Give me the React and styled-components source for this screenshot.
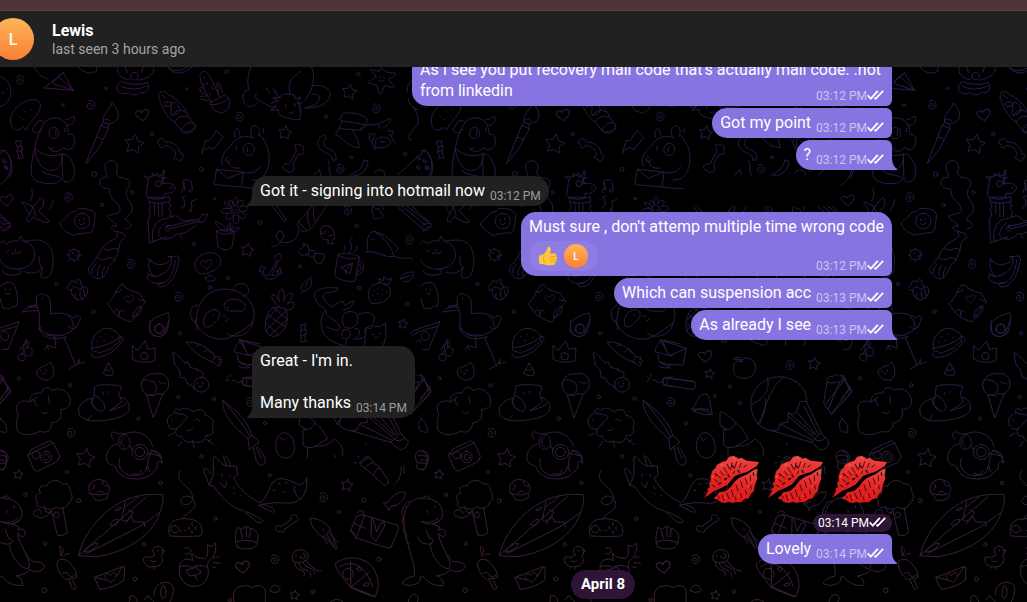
import React from 'react'
import styled, { createGlobalStyle, css } from 'styled-components'

const GlobalStyle = createGlobalStyle`
  * {
    box-sizing: border-box;
  }

  body {
    margin: 0;
    background: #000;
    color: #fff;
    font-family: Roboto, 'Liberation Sans', sans-serif;
    font-size: 16px;
    line-height: 21px;
  }
`

const Page = styled.div`
  display: flex;
  flex-direction: column;
  height: 100vh;
  overflow: hidden;
`

const TitleBar = styled.div`
  flex: none;
  height: 11px;
  background: #4f3439;
  border-bottom: 1px solid #594548;
`

const Header = styled.header`
  display: flex;
  flex: none;
  align-items: center;
  gap: 18px;
  height: 56px;
  background: #212121;
`

const Avatar = styled.span`
  display: flex;
  flex: none;
  align-items: center;
  justify-content: center;
  width: ${({ $size }) => $size}px;
  height: ${({ $size }) => $size}px;
  border-radius: 50%;
  background: linear-gradient(#ffb657, #f87e35);
  font-size: ${({ $size }) => ($size > 30 ? 16 : 10)}px;
  font-weight: 500;

  ${Header} & {
    margin-left: -8px;
  }
`

const Name = styled.h1`
  margin: 0;
  font-size: 16px;
  font-weight: 700;
  line-height: 20px;
`

const Status = styled.p`
  margin: 0;
  color: #a4a4a4;
  font-size: 14px;
  line-height: 17px;
`

const Chat = styled.main`
  position: relative;
  flex: 1;
  min-height: 0;
  overflow: hidden;
`

const Wallpaper = styled.svg`
  position: absolute;
  inset: 0;
  width: 100%;
  height: 100%;
`

const History = styled.div`
  position: relative;
  display: flex;
  flex-direction: column;
  justify-content: flex-end;
  gap: 6px;
  height: 100%;
  padding: 0 73px 3px 252px;
`

const Group = styled.section`
  display: flex;
  flex: none;
  flex-direction: column;
  align-items: ${({ $own }) => ($own ? 'flex-end' : 'flex-start')};
  gap: 2px;
  padding-right: 62px;
`

const Bubble = styled.div`
  position: relative;
  max-width: 480px;
  padding: 4px 8px;
  white-space: pre-line;
  background: ${({ $own }) => ($own ? '#8774e1' : '#212121')};
  border-radius: 15px;

  ${({ $own, $first, $last }) => $own && css`
    border-top-right-radius: ${$first ? 15 : 6}px;
    border-bottom-right-radius: ${$last ? 0 : 6}px;
  `}

  ${({ $own }) => !$own && css`
    border-bottom-left-radius: 0;
  `}
`

const Tail = styled.svg`
  position: absolute;
  bottom: 0;
  width: 6px;
  height: 14px;
  fill: ${({ $own }) => ($own ? '#8774e1' : '#212121')};
  ${({ $own }) => ($own ? 'left: 100%;' : 'right: 100%; transform: scaleX(-1);')}
`

const Meta = styled.span`
  display: flex;
  float: right;
  align-items: center;
  height: 12px;
  margin: 10px 0 0 5px;
  color: ${({ $own }) => ($own ? '#cbc3f3' : '#9c9c9c')};
  font-size: 12px;
  line-height: 12px;
  white-space: nowrap;
`

const Ticks = styled.svg`
  width: 17px;
  height: 12px;
  fill: none;
  stroke: #fff;
  stroke-width: 1.8;
`

const Footer = styled.div`
  display: flex;
  align-items: flex-end;
  justify-content: space-between;
  height: 31px;
  margin-top: 4px;
`

const Reaction = styled.button`
  display: flex;
  align-items: center;
  align-self: flex-start;
  gap: 6px;
  height: 30px;
  padding: 0 10px 0 9px;
  border: 0;
  border-radius: 15px;
  background: #8f7de3;
  color: #fff;
  font-family: inherit;
`

const BigEmoji = styled.div`
  display: flex;
  gap: 8px;
  padding: 31px 4px 7px 0;
`

const Pill = styled.div`
  display: flex;
  align-items: center;
  height: 18px;
  padding: 0 6px 0 5px;
  border-radius: 9px;
  background: #2e1437;
  font-size: 12px;
`

const DateLabel = styled.time`
  flex: none;
  align-self: center;
  height: 29px;
  padding: 0 10px;
  border-radius: 15px;
  background: #2e1437;
  font-size: 15px;
  font-weight: 700;
  line-height: 29px;
`

// small doodles that repeat all over the wallpaper
const swirls = [
  [60, 60], [272, 135], [205, 412], [392, 612], [535, 710], [718, 170], [1128, 145], [1042, 452], [1020, 327],
  [1228, 540], [212, 1119], [970, 1312], [824, 1498], [1107, 916], [750, 1026]
]
const stars = [
  [402, 253, 30], [855, 219, 21], [742, 571, 21], [1048, 96, 23], [1209, 792, 15], [256, 1195, 29],
  [55, 1244, 15], [867, 942, 15], [1180, 912, 19], [1041, 1276, 19], [884, 1606, 15]
]
const hearts = [
  [427, 164, 20], [20, 420, 19], [619, 612, 17], [388, 716, 14], [728, 1520, 21], [854, 888, 20], [332, 1552, 17]
]
const dots = [
  [318, 85, 4], [188, 135, 4], [560, 87, 4], [679, 35, 5], [456, 222, 5], [283, 342, 7], [604, 328, 6],
  [396, 397, 5], [306, 435, 5], [643, 416, 4], [582, 553, 5], [780, 487, 6], [170, 672, 5], [280, 755, 5],
  [684, 654, 5], [630, 683, 5], [978, 170, 5], [1075, 42, 5], [1054, 292, 4], [1069, 497, 5], [899, 619, 4],
  [1077, 684, 5], [1221, 732, 5], [1215, 282, 5], [539, 820, 5], [56, 955, 5], [210, 976, 5], [415, 1076, 5],
  [535, 1011, 5], [642, 1016, 5], [604, 1189, 5], [201, 1236, 5], [482, 1269, 5], [76, 1304, 5], [236, 1322, 6],
  [647, 1376, 5], [135, 1451, 5], [432, 1453, 5], [405, 1557, 6], [133, 1591, 7], [795, 1090, 5], [809, 1246, 5],
  [957, 1029, 5], [927, 980, 5], [1091, 1321, 6], [1017, 1356, 5], [1137, 1498, 6], [939, 1595, 5], [690, 1620, 5]
]

const starPath = r =>
  Array.from({ length: 10 }, (_, i) => {
    const a = (i * Math.PI) / 5 - 1.4
    const d = i % 2 ? r * 0.52 : r
    return `${i ? 'L' : 'M'}${(d * Math.cos(a)).toFixed(1)} ${(d * Math.sin(a)).toFixed(1)}`
  }).join('') + 'Z'

const upperLeft = [
  // paper plane, shell, potato
  'M132 84L190 38L220 91L132 84M190 38L158 66L162 72L220 91L176 50M102 20Q112 45 142 57',
  'M354 20C345 44 372 60 388 58M460 20C470 40 436 58 416 60M392 47A11 11 0 1 0 414 50A11 11 0 1 0 392 47M352 78C343 98 375 108 386 97C395 108 415 106 420 97C440 104 452 86 442 67C418 78 382 72 362 64C352 68 362 74 352 78M375 20L382 38M430 20L424 38M365 80Q402 96 440 78',
  'M32 185C28 145 85 108 115 122C138 150 88 182 78 210L70 202C45 220 32 205 32 185M58 170h2M75 155h2M92 148h2M70 178h2M90 168h2M0 50C45 60 42 130 0 140M6 98q4 6 8-2M22 85v2M234 20Q260 50 290 34L290 20M500 20Q535 60 578 20M505 24Q535 42 565 20',
  // candy and puppy
  'M48 244L64 242L62 254L68 262L64 276L70 293L54 296L56 284L50 276L54 264L49 254ZM52 262L66 258M52 276L66 270M0 272L14 272C40 290 42 350 0 374M8 300q12-2 10 8q-12 2-10-8M14 322q12-4 10 6q-12 2-10-6',
  'M104 266C110 232 122 205 130 192C145 168 180 168 195 188C205 200 204 215 206 224C220 218 228 238 222 255C215 272 195 272 190 262C178 280 150 276 145 262M132 186C118 172 108 188 97 210C100 220 118 222 126 208M196 178C208 182 210 168 222 170C228 188 214 196 200 196M162 202C142 202 142 236 162 236C182 236 182 202 162 202M168 208v18M195 205v10M152 268q4-8 10-4M104 266C95 295 90 340 98 352C108 374 175 378 185 358C178 342 130 348 124 330M104 266C112 350 190 350 187 284M104 266Q140 298 187 282M187 282C205 276 230 320 222 345C216 372 190 370 188 356Z',
  // paint brush, croissant, bone
  'M258 310L303 196L326 206L296 264ZM303 196L310 188L325 192L326 206M288 232Q300 230 308 240M310 188C304 160 332 150 336 128C364 160 362 186 325 192M310 182Q325 170 330 184',
  'M476 110C474 90 495 90 504 104C530 112 560 150 566 170L585 196C590 214 560 228 546 214L524 186C500 175 480 130 476 110M502 126a7 7 0 1 0 1 12a7 7 0 1 0-1-12M514 130C530 118 545 150 536 156C525 170 502 168 514 150ZM524 186Q540 160 566 172M546 214C538 204 570 176 585 194C590 206 560 222 546 214M514 168Q535 140 556 156M484 104l14 10',
  'M478 240C468 240 472 252 480 254C476 266 492 266 494 256C515 258 526 272 528 284C516 290 522 300 530 296C534 308 546 304 544 296C556 290 550 280 542 282C536 254 518 246 496 246C494 236 482 232 478 240',
  // cactus, crystal, bear with letter
  'M634 126C612 90 594 55 602 40C612 28 624 36 630 50L660 112M622 110L602 94C596 84 602 78 610 86M626 122L604 118C596 112 604 104 612 110M655 100L652 78C645 68 656 62 660 76L668 98M610 50l4 6M618 66l6 8M634 80l6 10M628 98l4 6M612 72l4 6M630 128L676 104L690 122L684 148L666 160L644 152ZM632 134Q660 136 686 116',
  'M605 280L616 242L628 242L650 212L670 232L640 268L626 262L608 272L606 280',
  'M650 328C644 360 642 372 644 374L724 381L730 336L650 328L684 355L730 336M668 318C660 300 670 275 690 260C705 232 735 222 760 234M684 292q-14 4-6 12q14 2 14-6M704 232C700 215 705 208 712 206C722 215 716 226 722 230M756 234C745 205 760 190 772 200C784 210 776 222 776 228M776 222C806 248 814 290 804 322C795 350 780 362 758 360M746 250C724 250 724 286 746 286C768 286 768 250 746 250M742 262v14M709 258v12M780 320Q765 345 732 338M724 381Q760 386 788 386M684 304Q690 330 718 324M790 206v12',
  // steam and bottle
  'M350 516C330 510 330 492 350 500C345 480 320 480 322 468C345 458 375 465 352 430C310 400 345 385 318 386C290 380 295 350 318 352C330 350 310 330 316 312C325 295 355 300 352 326C342 345 355 352 372 354C395 360 392 375 380 388C372 420 400 425 396 445C400 462 375 470 376 480C400 490 400 505 376 506',
  'M350 514L370 520L376 530L360 548C355 580 345 605 326 620C318 650 300 664 282 652C268 640 262 632 268 620C290 600 292 585 306 565C325 540 340 545 352 528ZM308 562Q320 576 334 568T358 572M292 592Q305 605 320 596T346 602M288 612Q275 620 276 640M300 616Q290 630 292 648M314 620Q304 634 306 650',
  // llama with guitar, notes
  'M438 402C445 370 440 350 460 348C472 342 470 352 488 352L486 372C505 366 522 372 526 382C522 400 505 402 494 400L492 412L446 412ZM456 348L458 340L466 346L472 338L476 348L486 346L490 330L494 332L490 356L500 352M444 360C428 346 432 346 440 350L450 352M474 362a9 9 0 1 0 1 18a9 9 0 1 0-1-18M492 356a6 6 0 1 0 1 12M514 380v6M446 412Q470 425 508 410L510 425Q480 434 448 426ZM463 430L464 462M475 430L476 470M487 430L486 470M448 428L452 440L446 452L452 462L444 480L448 550M506 428L512 438L506 446L514 456L510 468L518 472M460 545C452 520 462 495 475 484C490 472 495 480 512 470C535 462 535 475 548 482C560 484 570 478 582 480M495 490C480 500 470 520 478 530C490 545 520 535 528 522C550 525 570 510 588 496M500 500L596 478L600 484L510 506ZM508 496a9 9 0 1 0 1 16M596 478L606 464L625 463L612 484L600 488M540 526L545 535M448 550Q452 544 460 545M460 545L500 530',
  'M546 398C542 386 552 384 554 390L548 365Q560 354 574 364L578 392C568 402 560 390 574 388M554 390L552 368M546 446q0-10 8-8L552 418L546 412L556 408M570 452q0-10 6-8L574 424L588 418M568 456q6 2 8-6',
  // daisy in a pot
  'M704 434C690 434 688 466 704 466C722 466 722 434 704 434M692 440C678 420 694 412 700 432C696 400 720 408 710 432C726 410 740 424 722 440C750 432 754 456 722 454C750 470 730 486 716 466C722 496 696 500 700 468C680 490 668 474 688 458C654 468 656 440 690 446C660 430 672 414 692 440M698 448v3M710 448v3M698 456q6 5 12 0M700 496Q694 505 688 512M678 516C660 510 640 485 646 485C660 488 678 500 682 514C680 495 690 484 692 490L688 512C700 504 715 500 718 505C710 514 698 516 690 516M650 514L654 560Q675 578 696 562L704 514Q675 504 650 514Q675 532 704 514',
  // toy plane, fried egg, virus
  'M80 450C75 430 60 430 70 426L100 440L122 414C130 410 132 420 130 436C128 444 118 446 115 452L148 484C140 492 125 485 100 470C95 478 88 488 84 486C76 480 82 470 88 462ZM100 440L88 462M96 440Q106 450 106 466M95 386Q102 410 90 424M160 418Q158 440 146 450',
  'M180 492C180 480 196 482 204 464C215 450 225 462 235 445C260 445 285 450 286 466C282 485 284 510 272 518C245 520 240 520 220 526C200 520 180 500 180 492M246 460C216 460 216 506 246 506C276 506 276 460 246 460M238 478v4M252 476v4M238 490q8 10 16-2',
  'M222 568a16 16 0 1 0 1 32a16 16 0 1 0-1-32M222 568v-5M236 574l4-4M240 585h4M234 597l4 4M222 600v4M210 597l-4 4M205 585h-4M210 572l-4-4M216 580h4M228 588a4 4 0 1 0 5-4',
  // sleeping cat
  'M0 550L8 542L20 552C30 542 45 542 55 542L62 528L70 544C95 548 106 570 104 590C96 640 10 636 0 600M46 568v6M34 578q6 8 12 0q8 6 18-4M18 576l10-6M70 544Q110 536 130 544C165 560 164 610 152 644C140 656 122 658 122 644L128 620C122 635 100 645 76 636M8 630C4 642 30 650 60 642C66 632 60 626 52 628M118 590Q115 605 122 620',
  // bananas, thought bubble, pillow
  'M505 590L534 588L538 600C530 625 530 650 500 676C480 684 470 680 474 672L490 668C460 674 450 665 442 655L444 642L462 650C440 625 445 610 450 598C460 612 480 622 506 605L516 594L505 590M516 600C512 630 492 645 462 650M526 600C522 640 508 662 490 668M444 596L454 606M444 642Q452 650 460 648',
  'M585 620C580 590 620 572 645 580C672 590 666 625 636 634C605 650 590 640 585 620M616 654C622 642 644 646 645 656C640 668 620 666 616 654',
  'M324 730C340 715 345 700 352 688L360 675L372 675L378 684Q395 695 420 700L426 712L436 726L428 734C415 745 410 770 392 786C370 780 345 765 340 756ZM345 696Q362 700 364 688M398 770C398 755 415 735 424 740C428 755 410 775 398 770M416 718Q424 725 434 722M344 756C350 740 360 752 358 762M372 756C365 745 355 750 358 768',
  // cupcake, ghost, goose
  'M214 690C198 694 198 678 210 674C210 660 220 660 228 668C232 650 246 660 240 674C255 672 244 684 240 690C225 675 218 680 214 690C214 705 222 718 238 720C262 715 266 690 260 682Q250 676 240 690M226 700Q220 708 230 718M240 696Q236 708 246 716M250 688Q254 700 254 708',
  'M0 680C10 665 30 664 40 672C52 690 56 720 50 738C46 745 40 735 34 742C26 752 18 742 10 745C6 735 2 725 0 715M16 686v4M30 686v4M18 700q6 6 12 0',
  'M66 756C80 740 95 740 112 742L112 736L84 738Q95 738 110 734C105 700 120 698 134 704C158 712 150 740 152 762C175 756 205 760 222 775C226 765 236 766 242 774L230 802Q215 810 205 800M112 742C125 770 115 790 118 810M66 756Q95 750 116 752M205 770Q222 780 220 800M126 714v3M118 805C125 830 150 845 200 830M140 825Q190 840 230 800',
  // panda
  'M592 810C580 760 600 705 650 690C720 675 775 730 760 778C755 830 700 838 680 820M592 735C565 738 565 778 588 790M700 688C700 670 740 660 746 690C746 705 735 708 728 708M672 738C672 720 690 716 708 718C740 724 740 745 728 754C706 752 690 756 680 750ZM612 795C605 770 625 750 645 748C664 752 662 775 645 785C632 804 615 805 612 795M684 740v4M640 764v4M668 768h8M676 784q8-2 10-8',
  // avocado
  'M450 790C460 770 485 766 505 758C512 770 505 800 500 815C490 835 450 835 448 810ZM478 792C462 792 462 820 478 820C494 820 494 792 478 792'
]

const upperRight = [
  // whale and axolotl
  'M32 22C20 60 22 76 28 90C5 85 2 130 22 138C40 142 52 134 52 126M50 98Q42 108 52 118L94 142M150 100C142 70 155 50 172 42L182 34M215 22C228 50 220 90 194 122M220 78C250 70 275 88 270 108C262 138 220 146 194 144Q230 138 238 120C240 108 232 98 216 104',
  'M94 142L110 138L92 152L116 148L114 160C135 175 160 180 180 178C184 150 178 130 172 124L182 112L166 116L164 106C140 98 125 102 120 112L102 96M120 112L98 114L116 122L94 130M172 130L184 128L176 140L184 148M78 82L90 100M100 85L110 98M138 134v10M164 130v10M148 158q8 6 14-2',
  // starfish
  'M400 38C388 30 388 22 400 30L418 34L424 22L438 36L466 40C470 46 455 54 444 58L464 78C464 88 440 78 434 76L424 100C416 106 414 90 412 76L386 70C384 62 400 58 408 52ZM420 50v3M432 52v3M418 62q8 6 14 0',
  // bones and streamers
  'M166 260C160 252 172 250 176 256C188 252 194 260 188 270C196 276 190 286 176 282L158 314C168 324 160 338 150 336C146 340 138 336 140 330C126 330 124 318 134 314C140 310 146 312 148 312L168 276Z',
  'M250 224C230 235 226 262 250 274C268 285 278 286 276 300L288 300C290 280 280 272 264 266C248 258 248 246 258 236ZM372 300L384 303C386 325 365 350 340 346M372 300C370 325 350 334 330 346M264 302C275 320 260 320 272 346M222 345L238 328L242 345M402 340Q415 322 432 335L434 345',
  // jar of flowers
  'M306 165C315 152 350 158 378 172C385 185 378 195 370 194C345 185 315 188 300 180ZM306 186L298 204C320 210 345 210 360 210L372 196L414 192L420 206M298 204L286 222C300 230 315 245 330 256C340 260 350 264 358 262L354 240L334 206M380 196L360 214M414 192L450 176C455 184 440 196 430 204M388 225C388 215 396 220 396 226C402 216 408 224 404 232L396 246L388 238ZM396 246L404 270L410 262M408 240C420 225 448 230 452 248C445 262 420 268 408 262ZM445 215C440 205 452 208 452 216C460 208 462 220 454 226L446 222M452 226L465 250M420 244q8 6 14 0',
  // balloon, melon, pencil
  'M502 95C500 75 508 65 515 64M504 115C505 130 515 140 525 142L522 148L532 148M526 148C530 165 540 175 532 195C515 215 500 228 510 242L516 236M472 345L556 270C580 295 585 330 570 352M532 292q10-4 10 6q-10 4-10-6M530 320q10-4 10 6q-10 4-10-6M556 318q10-4 10 6q-10 4-10-6M472 440L545 505C555 520 575 505 572 490L515 438M486 438L556 495M500 438L562 485M545 505Q548 488 572 490M550 514Q555 500 574 500',
  // firework, lighter stick
  'M98 440L134 486L140 480L110 438M218 438L176 484C168 495 178 510 188 514C205 516 215 505 222 495L258 440M205 450Q198 475 210 500M222 440Q215 465 225 485M176 484Q190 505 200 510M176 510C175 535 160 546 138 548C108 550 100 520 120 514C138 515 132 535 122 545C115 556 100 562 94 558M398 440Q392 455 400 465C394 480 410 476 414 474C432 478 434 462 424 460Q418 442 408 446ZM428 440L430 450',
  // chick, bow tie
  'M264 540C242 545 236 510 246 500C265 490 285 505 284 530C282 540 276 540 274 544L282 552L264 550ZM256 512v4M242 520h12M266 528L278 524',
  'M174 574L194 556L188 550L204 556L208 572C220 568 226 576 224 580L254 582C250 595 255 600 246 604L242 612L226 606L222 592C210 592 206 588 204 584L186 586ZM208 572L204 584M224 580L222 592',
  // anchor, mug
  'M118 582C105 580 100 595 110 600L88 644M118 582C128 586 125 600 115 602L96 646M112 590h2M58 634L62 618L76 624L70 632C70 645 76 650 88 644M96 646C108 650 115 645 116 634L108 636L120 624L124 642L118 640C110 662 70 668 62 630',
  'M294 584C305 574 345 582 358 590C350 602 305 596 294 584L284 646C298 662 330 668 346 662L358 590M358 604C378 605 376 640 350 646M358 614C366 616 365 630 354 636M302 622L338 610L330 642L316 632L302 622M338 610L316 632L318 642M312 572Q320 565 314 556M328 578Q340 562 332 548Q326 540 338 530M342 578Q352 570 350 558',
  // shark fin, leaf, strawberry
  'M376 576Q400 572 420 582T466 590Q485 598 500 594T518 600M384 572C378 545 382 520 402 514C430 520 460 545 476 566L466 574M402 514C430 530 455 560 462 588M392 538q6 6 12 0M184 690C180 675 195 665 210 655C220 665 214 690 188 694L184 700M202 668L196 680M210 655L214 650M482 656C485 640 505 635 520 636C520 660 505 668 490 664M480 658L510 646',
  'M386 700C384 680 400 672 420 668C445 670 455 685 450 706C440 724 420 732 396 730C386 722 386 710 386 700M420 668L416 656L430 662L432 650L440 658L456 656L446 672L432 676M400 690h2M414 684h2M428 688h2M398 706h2M412 702h2M426 704h2M438 698h2M404 720h2M420 718h2',
  // pineapple and candy
  'M118 742C85 735 70 780 78 810C85 835 110 832 122 820C145 800 145 765 138 748ZM118 740C100 725 92 710 96 704C108 705 116 715 118 724C110 700 120 690 126 686C136 700 134 715 130 722C140 700 152 698 158 700C160 712 148 724 142 730C158 724 165 730 162 736C156 750 145 752 138 750M84 764Q115 790 138 800M80 790L112 822M100 742L144 780M78 812L138 752M90 826L145 775M80 780L112 744M182 795L198 792L194 804L200 815L194 828L198 845L182 846L184 832L180 820L184 808ZM182 812L198 808M182 828L198 822',
  // monkey with kitten
  'M292 684C260 680 220 685 224 710C228 735 250 740 258 750C238 770 240 800 252 820C262 840 285 850 310 856M292 684C296 700 275 692 255 700C240 712 260 728 276 742C290 730 305 720 312 726C310 745 325 728 340 722C345 738 325 748 308 750M308 790C300 760 325 748 345 758C360 775 355 795 335 804C318 806 310 800 308 790M258 755C265 780 285 775 300 800C302 820 270 805 258 800M310 810C330 800 340 830 320 836C305 840 300 825 310 810M344 806C360 800 365 825 350 832M355 765C380 750 412 760 402 785C398 800 370 800 374 818M374 856L378 802L390 806L400 798L418 800L436 790L438 830L430 856M398 820v4M420 818v4M404 832q6 4 10 0M320 840L316 856M340 836Q360 842 372 830',
  // pizza slice
  'M510 822C530 800 570 800 600 784L566 868L548 868M516 828C535 812 560 808 590 800M556 815C540 815 540 842 556 842C572 842 572 815 556 815M530 845q8-12 14 2'
]

const lowerLeft = [
  // goose legs, burger, cherries, crown
  'M164 52L168 84L140 76M134 90L140 78L148 90M192 52L228 138M206 148L232 132L238 118L236 132L254 126M120 20C125 40 150 48 172 44',
  'M276 84C270 50 300 20 330 26C355 36 358 44 360 50C345 66 310 80 276 84M276 84C270 96 285 92 292 96C300 104 305 94 315 94C325 85 340 88 345 74C355 70 362 65 360 50C372 48 374 56 364 66C350 90 330 100 310 108C290 115 272 115 274 100M300 50h2M318 42h2M336 52h2M312 62h2M292 66h2',
  'M66 102C50 100 50 122 66 122C80 122 80 102 66 102M82 82C102 78 102 112 82 108C72 104 70 88 82 82M66 102C72 90 70 80 78 60M82 82L78 60C84 60 90 64 86 76M60 90L72 72M398 76L412 92L436 62L444 88L466 84L464 122Q430 134 398 118ZM432 98a11 11 0 1 0 1 22a11 11 0 1 0-1-22',
  // avocado, panda chin, carrot
  'M450 0C445 30 455 48 475 50C500 48 495 20 508 0M478 12C458 12 458 40 478 40C498 40 498 12 478 12M584 0C600 45 640 62 680 56C710 45 735 25 758 8M560 66C590 62 640 90 645 112L636 126C610 115 575 95 560 66M590 78l8-4M612 96l10-8M626 90l8 10M645 112C665 105 665 118 655 118C675 120 665 130 655 126C668 138 655 142 646 130L636 126',
  // comet, strawberry, acorn, ice cream
  'M524 134L518 98C535 100 545 125 556 130L562 124L570 142L594 148L590 152C615 150 612 168 606 172M604 172C575 172 575 216 604 216C634 216 634 172 604 172M524 134L538 150L542 172L556 175L560 188L576 198L582 206M592 188v4M608 188v4M596 200q8 4 12-4',
  'M110 158C108 145 130 140 142 134L150 126L154 132C165 145 162 175 145 180C125 182 112 172 110 158M122 152v3M138 150v3M128 160q5 4 8 0M310 160C315 145 322 140 324 130C330 140 342 150 340 164Q325 172 310 160M314 148Q328 158 336 144M324 130L330 132',
  'M426 204C415 180 438 175 448 182C470 185 475 205 462 220C450 232 430 225 426 204M424 195C425 170 450 158 466 162C478 155 505 165 505 185C508 205 500 215 492 216C500 225 475 222 470 220L462 228L445 224M440 226L460 294L488 222M478 184C480 196 492 182 498 192',
  // chef hat cloud, hot tub bear, cream
  'M50 270C45 245 70 238 90 246C85 225 110 215 124 220C128 198 150 198 156 212C170 202 205 205 210 240C215 260 195 270 182 268C190 300 165 310 156 308C155 335 135 340 120 334C90 350 60 345 52 330C42 300 62 290 50 270M90 246Q95 235 105 240M110 232C95 230 105 250 112 258M145 230L148 250M124 276Q135 286 144 276M0 165L32 212L0 250M0 175L12 180L24 210L0 235',
  'M236 276C230 250 265 235 280 234C285 215 282 205 286 198C300 192 350 194 362 198C368 215 350 215 360 232C385 235 392 258 386 272C375 295 310 305 270 302C245 295 236 290 236 276M280 234C265 245 280 262 300 274C325 274 315 240 285 226M280 234C270 240 278 260 290 270M360 232L366 245Q350 260 328 272Q370 262 378 250M262 302L275 285M310 218v4M326 214v4',
  // sheep, umbrella
  'M502 300C505 285 515 285 524 278C520 265 530 264 540 270C555 258 570 268 580 276C600 262 618 272 614 285C640 290 645 310 636 320C648 345 625 350 618 345C615 372 585 370 578 362C560 375 545 355 545 348C525 352 525 335 530 326C515 330 502 325 502 300M524 278C535 285 560 280 562 292C555 298 555 305 548 306C540 322 530 326 530 326M516 300v3M504 348L520 340M546 364L536 380M578 364L582 382M620 358L642 374M625 366L634 358M585 300q10-8 14 4M560 330q12 6 18-6',
  'M668 240C690 260 740 290 756 346L744 356C715 330 665 290 668 240M672 244C700 280 730 310 750 350M744 356L748 390L760 380L778 366L756 346M760 382L768 420C774 442 800 440 796 418L782 390L772 380M770 384L784 415',
  // egg, firecracker
  'M852 338C830 340 820 375 832 398C845 420 875 420 882 395C888 370 875 338 852 338M840 352l8 10l8-8M730 174L756 170M730 196L756 200M730 174C724 180 726 192 730 196M726 184L712 188Q705 178 698 180M690 162L692 170M680 170l6 6M678 182l8-2M704 96C700 80 720 65 724 60L780 72M704 96L756 108M724 60L738 92M712 104L715 125L750 145',
  // camera, pilot
  'M84 405L95 388L150 362L160 368L180 410L170 426L112 454L102 448ZM84 405L160 368M108 394C92 394 92 416 108 416C124 416 124 394 108 394M138 394C116 394 116 428 138 428C160 428 160 394 138 394M138 402C128 402 128 420 138 420C150 420 150 402 138 402M0 392C20 390 28 430 10 450L0 448M0 420L18 420',
  'M352 372C325 375 310 410 325 430C340 440 345 432 350 450C370 485 440 485 460 455C480 445 465 430 475 425L486 425C480 395 460 400 455 390C480 395 485 405 486 430M340 358C330 345 332 335 345 336C355 345 370 340 380 340C415 328 450 345 458 380M372 344C350 344 350 388 372 388C396 388 396 344 372 344M420 374C386 374 390 418 420 418C454 418 450 374 420 374M390 376L396 388M372 352C360 352 360 380 372 380M418 382C400 384 400 408 418 410C440 408 440 384 418 382M446 400L480 408M360 415C350 440 365 455 385 465C410 470 440 465 440 440M396 460L416 464L424 450M455 390C440 420 440 450 450 456',
  // tree, mushroom
  'M112 546C100 525 115 520 122 520C112 505 120 495 140 498C145 480 175 475 186 492C205 488 212 505 210 512C222 530 215 545 206 548C200 570 175 568 168 560C160 572 135 568 132 560C120 570 105 558 112 546M132 560L138 575L152 580M152 574C145 595 110 598 112 588C98 592 96 575 108 570C120 566 128 575 124 582M154 570L172 646Q190 650 202 638L188 562M168 576C158 578 160 592 170 592C182 592 180 576 168 576',
  'M270 520C262 505 265 482 295 478C320 480 330 495 328 512C322 530 285 525 270 520M270 520C275 528 285 532 284 540Q302 546 322 534L324 524M276 490Q292 500 275 510M308 484Q306 500 324 498M292 520Q300 505 312 520',
  // surfboard
  'M236 706C245 665 270 620 320 575C370 535 420 518 488 524C492 540 485 575 465 610C430 665 360 700 290 710ZM236 706L440 530M260 700L415 622Q450 600 478 578M376 545L365 600Q375 610 395 590L402 606L432 606L434 620M376 612L400 576L385 570M415 530L376 560M254 696C262 680 282 668 294 670C288 685 268 696 254 696M330 614C332 602 350 595 356 600C352 615 338 620 330 614M346 570q10-12 18-6q-6 10-18 6',
  // gamepad
  'M510 648C500 630 508 600 535 598Q560 592 580 600C605 605 612 635 602 648Q555 652 510 648M524 616C508 616 508 638 524 638C540 638 540 616 524 616M578 608a4 4 0 1 0 1 8M578 632a4 4 0 1 0 1 8M568 620a4 4 0 1 0 1 8M588 620a4 4 0 1 0 1 8M540 632h3M555 632h3M550 596C550 580 580 578 586 555C582 530 560 520 545 535C535 550 555 560 570 550C585 535 578 520 560 500C535 480 530 470 542 450',
  // fox
  'M640 412L640 465L628 496M640 412C648 402 655 425 665 430L678 438L710 438L712 466L700 474C720 510 750 535 780 548M628 496L642 500C670 540 700 565 730 572L770 606C785 612 795 605 780 595L740 575M628 496L612 455C610 440 618 440 632 462M670 408L680 438M670 408C680 405 690 425 692 438M780 548C810 530 800 495 830 478C860 470 880 490 900 495C915 490 918 480 920 472C925 520 905 545 870 550C840 548 820 545 776 556L815 576C828 580 825 565 812 562L790 552M884 498Q878 520 900 538M660 488l14 16l6-18M665 462v6M690 465v5M700 500l4 6M720 525l4 4M700 520l3 4M820 510l6 2M835 490l6 2M856 488l5 2M850 516l6 2',
  // shell, bone, squid
  'M712 682C700 660 708 640 712 622L726 628C735 615 745 620 750 626C765 625 772 640 774 645C775 665 770 685 750 686Q730 690 712 682M722 632L728 655M738 622L740 650M752 626L748 652M710 665Q740 655 770 668M828 628C822 618 834 614 842 620L874 598C868 588 876 584 882 586C885 578 892 590 890 592C900 596 892 606 884 606L852 630C855 640 845 638 842 634C835 636 828 634 828 628',
  'M932 594C960 595 985 615 990 630L970 652C950 640 930 620 932 594M970 652L982 672M976 650L1000 680M982 645L1008 688M990 632L1012 686M990 640L1014 668M970 626v6',
  // duck, fish bowl, popsicle, letter
  'M464 704C450 690 465 675 478 680C495 685 490 700 484 712C495 720 482 740 465 740C440 745 425 725 432 712C440 710 445 712 450 712ZM484 690L494 692L486 700M450 742L446 746M464 740L462 748M474 690v3M450 720Q458 730 468 722',
  'M538 750C535 720 560 710 578 722L575 700L590 712L614 716C628 705 622 690 622 675L636 680L646 668C652 700 638 712 625 724L622 738C630 760 622 790 595 798C560 805 535 780 538 750M540 740Q560 732 575 742Q600 730 622 742M560 750L590 742C590 750 602 750 604 758L590 765L570 768ZM585 768L592 780M554 684Q575 680 572 695Q565 708 555 700M636 740L648 744M640 728L660 730M640 716Q650 705 656 712',
  'M172 740C165 720 185 712 202 722C222 740 230 755 230 772C215 780 205 772 200 780C185 770 175 755 172 740M188 760Q200 752 206 765T228 762M206 780L218 806C228 812 230 800 226 798L218 780M180 680C186 678 195 690 184 708ZM192 708Q196 698 208 702M284 772L368 740L374 742L372 780Q340 805 300 808ZM284 772L320 780M368 740L350 768',
  // jellyfish, cloud, leaf
  'M878 722C870 700 890 685 910 690C930 698 925 715 918 722Q895 735 878 722M888 706v4M900 708a8 8 0 1 0 8-8M884 728Q885 745 902 750T912 768M896 730Q900 745 918 750T932 770M908 728Q915 740 930 745T944 762M918 722Q930 740 945 748T964 752M702 846C696 820 705 798 730 798C745 792 755 805 758 802C780 790 802 800 796 828L796 846M810 812C812 800 820 795 828 796C842 800 842 812 836 815Q820 822 810 812M388 846L390 828Q405 820 412 846M434 840L444 826L462 846M462 825C460 800 480 785 500 787C525 790 525 815 510 846M490 796C480 800 480 830 488 836C500 835 500 800 490 796'
]

const lowerRight = [
  // peach, bell, paper roll
  'M222 90C225 75 240 78 248 80C245 70 225 75 222 72C235 62 250 70 250 76L258 66L262 70C285 70 290 90 286 110C275 132 250 134 235 126C222 118 218 105 222 90M16 128C8 130 8 148 16 150L100 164C108 160 110 145 104 140ZM16 128C26 130 26 148 18 150M26 130L104 140M0 80L22 88L70 90L80 40L0 14L30 62L80 40M0 95L22 100L32 90',
  'M96 222C110 210 115 185 125 180C138 170 150 185 150 195L158 238C140 242 110 235 96 222M96 222Q125 218 158 238M100 230Q120 215 150 225M162 180v6M168 178v10M140 176l4 4',
  // hot air balloon
  'M340 288C295 285 270 240 274 200C280 150 325 120 372 126C420 135 445 170 440 200M324 128C330 170 318 185 272 212M372 126C340 150 318 200 300 268M318 190Q322 240 292 268M340 288L355 284L362 265L384 262L386 232Q400 245 412 228L422 198L440 200M440 200L484 292M434 215L475 296M412 232L470 300M388 245L462 308M362 268L458 315M340 288L455 322M386 232L465 300M455 322L484 294L508 320Q505 342 482 345L455 322M464 312Q480 325 498 308',
  // cake slice
  'M492 205L502 140C500 128 512 120 518 126C525 115 535 118 540 124C550 115 558 128 556 135L576 172L516 238L492 205M502 142Q525 148 556 135M500 205L550 140M516 238L572 155M506 222L540 142M540 275C535 265 545 256 548 252C562 265 566 275 564 292C545 292 538 285 540 275M548 252L544 246',
  // tree and popsicle
  'M182 232C190 225 215 250 228 262C225 275 210 284 204 284L182 272ZM204 284L192 284L192 330C200 340 220 340 228 334L265 312C260 295 240 272 228 264M228 334C245 335 270 330 286 312C305 325 318 345 310 362M205 336L205 370M265 335h2M285 360L292 370'
]

const lowerMiddle = [
  // torch, flashlight beam, cupcake
  'M90 432C88 420 110 405 118 412L132 430L148 440L175 482C178 492 165 498 158 492L118 455L104 445ZM90 432Q100 420 118 412M104 445Q110 432 130 428M132 462Q136 446 150 444M108 370v4M82 408l6 4M80 428h-8M196 490Q215 475 214 440M222 440V460M262 425C252 415 254 395 270 392C290 390 300 405 295 425Q278 435 262 425M262 425L260 444Q275 455 288 440L290 425M262 408Q275 400 292 412',
  // fish, jar
  'M176 545C185 525 205 515 226 516C228 535 205 560 184 558L176 572L172 560L160 552ZM62 632L78 590Q90 582 104 586L204 616L205 630L182 684Q170 686 80 654ZM78 655L104 586M125 594L130 600L140 636L150 612L162 606L164 618L138 664L124 650ZM72 610L106 625M82 578q8-10 16-4q8 4-2 10M64 632L78 645',
  // dinosaur
  'M252 768C262 740 232 690 228 640C215 600 220 550 260 536C300 528 335 545 338 578C338 600 325 608 308 612L328 620L326 630C345 620 355 640 340 652L324 640C335 680 350 705 368 724C390 725 405 730 406 742C395 755 375 760 362 748C350 760 340 765 320 768C335 770 342 790 340 796C310 800 290 785 278 768L270 772C278 795 230 802 218 790C220 778 240 770 252 768M275 605Q305 612 324 596M275 605Q310 622 325 602M292 570v8M314 558v6M262 650Q270 672 290 672C312 675 315 655 298 655L288 628M302 668C295 690 325 745 356 746C365 735 360 720 348 705M222 560C212 575 216 590 222 590C212 605 218 618 224 618C218 630 222 642 228 645C225 655 232 670 238 670M240 545C232 540 226 550 224 560M278 534Q290 522 300 532',
  // pizza
  'M18 730C50 700 145 705 145 800L136 830C110 825 90 815 62 802C45 780 25 760 18 740ZM30 740C50 725 100 718 128 800M62 725L62 802L120 755M55 745C30 745 35 778 55 778C75 778 75 745 55 745M80 745Q95 738 94 750Q85 760 80 745M100 795Q105 785 118 790Q112 805 100 795M60 800L136 830M235 846Q240 820 258 824Q270 832 262 846M0 846Q20 830 40 846'
]

const Tile = () => (
  <g id='tile'>
    {upperLeft.map(d => <path key={d} d={d} />)}
    <g transform='translate(720 0)'>{upperRight.map(d => <path key={d} d={d} />)}</g>
    <g transform='translate(0 780)'>{lowerLeft.map(d => <path key={d} d={d} />)}</g>
    <g transform='translate(717 825)'>{lowerRight.map(d => <path key={d} d={d} />)}</g>
    <g transform='translate(990 780)'>{lowerMiddle.map(d => <path key={d} d={d} />)}</g>
    {dots.map(([x, y, r]) => <circle key={`${x}-${y}`} cx={x} cy={y} r={r} />)}
    {swirls.map(([x, y]) => (
      <path key={`${x}-${y}`} transform={`translate(${x} ${y})`} d='M-10-10C-2-18 14-12 12 2C10 16-10 16-10 3C-9-7 4-7 4 1C3 7-3 6-3 2' />
    ))}
    {stars.map(([x, y, r]) => <path key={`${x}-${y}`} transform={`translate(${x} ${y})`} d={starPath(r)} />)}
    {hearts.map(([x, y, r]) => (
      <path key={`${x}-${y}`} transform={`translate(${x} ${y}) scale(${r / 20}) rotate(-6)`} d='M0 18C-10 10-22 2-20-7C-17-16-5-14-1-6C4-18 20-18 20-5C19 5 8 12 0 18' />
    ))}
  </g>
)

const Doodles = () => (
  <Wallpaper aria-hidden='true'>
    <defs>
      <linearGradient id='across'>
        <stop offset='0' stopColor='#351343' />
        <stop offset='0.3' stopColor='#2e1742' />
        <stop offset='0.6' stopColor='#221d46' />
        <stop offset='1' stopColor='#20204f' />
      </linearGradient>
      <linearGradient id='down' x2='0' y2='1'>
        <stop offset='0.35' stopColor='#3a1c3c' stopOpacity='0' />
        <stop offset='1' stopColor='#3c2138' />
      </linearGradient>
      <mask id='lines' maskUnits='userSpaceOnUse' x='0' y='0' width='100%' height='100%'>
        <g transform='translate(0 -7) scale(0.33333)' fill='none' stroke='#fff' strokeWidth='3' strokeLinecap='round' strokeLinejoin='round'>
          <Tile />
          {[-1, 1, 2, 3, 4].map(n => <use key={n} href='#tile' x={n * 1262} />)}
        </g>
      </mask>
    </defs>
    <g mask='url(#lines)'>
      <rect width='100%' height='100%' fill='url(#across)' />
      <rect width='100%' height='100%' fill='url(#down)' />
    </g>
  </Wallpaper>
)

const Kiss = () => (
  <svg width='56' height='50' viewBox='0 0 168 150' role='img' aria-label='Kiss mark'>
    <defs>
      <linearGradient id='lip' x2='0' y2='1'>
        <stop offset='0' stopColor='#ee4a48' />
        <stop offset='0.5' stopColor='#e32424' />
        <stop offset='1' stopColor='#dc1919' />
      </linearGradient>
    </defs>
    <path fill='url(#lip)' d='M1 128L12 108L10 102L18 96L15 84L21 78L19 66L25 48L35 38L38 30L52 22L66 18L76 5L90 2L104 11L112 8L128 17L165 21L158 34L130 50L106 58L92 64L72 88L52 99L30 108L14 120Z' />
    <path fill='url(#lip)' d='M28 130L38 122L46 112L66 108L80 96L94 78L106 68L130 58L150 44L161 41L158 62L160 70L152 92L150 108L140 118L134 130L122 132L110 142L96 141L86 144L74 140L64 144L50 142L42 134Z' />
    <g fill='none' stroke='#240202' strokeWidth='2.500' strokeLinecap='round'>
      <path d='M70 28L76 42M84 24L80 44M98 20L92 40M112 24L106 38M60 38L68 52M50 50L58 60M40 60L50 70M32 74L42 82M24 90L34 96M128 30L120 36M92 48L88 56' />
      <path d='M54 120L60 136M68 114L76 132M82 104L88 124M96 90L102 108M110 78L116 98M124 70L130 88M138 62L140 76M94 126L96 136M110 116L112 128M124 106L128 118M42 122L46 130M140 92L142 102' />
    </g>
    <path d='M62 74L68 70M44 88L50 84M102 46L106 52M72 58L76 66M34 56L38 62M86 32L88 38M148 54L149 60' stroke='#200202' strokeWidth='4' strokeLinecap='round' />
    <path d='M48 32L60 27M88 10L94 14M26 70L28 60M130 96L134 90M62 126L64 132M104 120L106 126' stroke='#ff8a83' strokeWidth='3' opacity='0.5' />
  </svg>
)

const ThumbsUp = () => (
  <svg width='20' height='20' viewBox='0 0 20 20' role='img' aria-label='Thumbs up'>
    <path d='M1 10.2Q1 9 2.300 9L5 8.600C7 7.500 9 4.500 9.300 2Q9.500.5 11 .8C13.200 1.400 13.200 4 12 7.600L16.800 7.600Q18.800 8 18.300 10.200Q19.700 11.300 18.700 12.900Q19.300 14.300 18 15.400Q18.200 16.800 16.900 17.400Q16.700 19.200 14.800 19.200H9.500Q7.500 19.200 6 18.200L2.300 18Q1 18 1 16.500Z' fill='#ffc83a' />
    <path d='M12.500 10.600H18M12.300 13.200H18.200M12.300 15.600H17.500M6 9.500Q5 13 6.300 17' stroke='#e99b1f' strokeWidth='0.8' fill='none' />
  </svg>
)

const Time = ({ own, children }) => (
  <Meta $own={own}>
    <time>{children}</time>
    {own && <DoubleCheck />}
  </Meta>
)

const DoubleCheck = () => (
  <Ticks viewBox='0 0 17 12' role='img' aria-label='Read'>
    <path d='M0.600 5.400L3.800 8.700L10.800 0.800M7.400 7.800L8.600 8.800L16.200 0.800' />
  </Ticks>
)

const Message = ({ own, first, last, time, reaction, children }) => (
  <Bubble $own={own} $first={first} $last={last}>
    {children}
    {reaction ? (
      <Footer>
        {reaction}
        <Time own={own}>{time}</Time>
      </Footer>
    ) : (
      <Time own={own}>{time}</Time>
    )}
    {last && (
      <Tail $own={own} viewBox='0 0 6 14'>
        <path d='M0 0C0 6 1 10 5 13Q6 14 4 14H0Z' />
      </Tail>
    )}
  </Bubble>
)

const App = () => (
  <Page>
    <GlobalStyle />
    <TitleBar />
    <Header>
      <Avatar $size={42}>L</Avatar>
      <div>
        <Name>Lewis</Name>
        <Status>last seen 3 hours ago</Status>
      </div>
    </Header>
    <Chat>
      <Doodles />
      <History>
        <Group $own>
          <Message own time='03:12 PM'>
            As I see you put recovery mail code that's actually mail code. .not from linkedin
          </Message>
          <Message own time='03:12 PM'>Got my point</Message>
          <Message own last time='03:12 PM'>?</Message>
        </Group>
        <Group>
          <Message last time='03:12 PM'>Got it - signing into hotmail now</Message>
        </Group>
        <Group $own>
          <Message
            own
            first
            time='03:12 PM'
            reaction={
              <Reaction type='button'>
                <ThumbsUp />
                <Avatar $size={24}>L</Avatar>
              </Reaction>
            }
          >
            Must sure , don't attemp multiple time wrong code
          </Message>
          <Message own time='03:13 PM'>Which can suspension acc</Message>
          <Message own last time='03:13 PM'>As already I see</Message>
        </Group>
        <Group>
          <Message last time='03:14 PM'>{"Great - I'm in.\n\nMany thanks"}</Message>
        </Group>
        <Group $own>
          <BigEmoji>
            <Kiss />
            <Kiss />
            <Kiss />
          </BigEmoji>
          <Pill>
            <time>03:14 PM</time>
            <DoubleCheck />
          </Pill>
          <Message own last time='03:14 PM'>Lovely</Message>
        </Group>
        <DateLabel>April 8</DateLabel>
      </History>
    </Chat>
  </Page>
)

export default App
